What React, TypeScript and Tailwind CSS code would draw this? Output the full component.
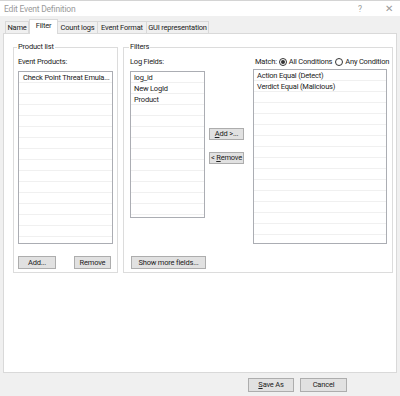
import React from "react";

function ListBox({
  items,
  rows,
  className,
  padX,
}: {
  items: string[];
  rows: number;
  className: string;
  padX: string;
}) {
  const all = Array.from({ length: rows }, (_, i) => items[i] ?? "");
  return (
    <div className={`bg-white border border-[#abadb3] overflow-hidden min-w-0 ${className}`}>
      {all.map((t, i) => (
        <div
          key={i}
          className={`h-[11px] leading-[11px] border-b border-[#f0f0f0] whitespace-nowrap overflow-hidden ${padX}`}
        >
          {t}
        </div>
      ))}
    </div>
  );
}

function Btn({ children, className }: { children: React.ReactNode; className: string }) {
  return (
    <div
      className={`bg-[#e1e1e1] border border-[#adadad] flex items-center justify-center leading-[10px] whitespace-nowrap shrink-0 ${className}`}
    >
      {children}
    </div>
  );
}

function Radio({ checked }: { checked: boolean }) {
  return (
    <span className="w-[8px] h-[8px] rounded-full border border-[#333] bg-white flex items-center justify-center">
      {checked && <span className="w-[4px] h-[4px] rounded-full bg-[#333]" />}
    </span>
  );
}

export default function App() {
  return (
    <div className="w-[400px] h-[396px] bg-[#f0f0f0] flex flex-col font-['Roboto',sans-serif] text-[7.5px] leading-[10px] text-[#222] overflow-hidden whitespace-nowrap tracking-[-0.2px]">
      {/* Title bar */}
      <div className="h-[16px] bg-white border-t border-[#d4d4d4] flex items-center pl-[4px] text-[#9a9a9a] text-[8.5px] shrink-0">
        <span>Edit Event Definition</span>
        <div className="ml-auto flex items-center">
          <span className="w-[10px] text-center mr-[13px]">?</span>
          <span className="w-[22px] text-center text-[10px]">✕</span>
        </div>
      </div>

      {/* Tabs */}
      <div className="h-[17px] flex items-end pl-[5px] shrink-0">
        <div className="w-[24px] h-[12px] border border-b-0 border-[#d9d9d9] bg-[#f0f0f0] flex items-center justify-center shrink-0">
          Name
        </div>
        <div className="w-[29px] h-[15px] border border-b-0 border-[#d9d9d9] bg-white flex items-start justify-center pt-[1px] relative z-10 -mb-[1px] shrink-0">
          Filter
        </div>
        <div className="w-[40px] h-[12px] border border-b-0 border-l-0 border-[#d9d9d9] bg-[#f0f0f0] flex items-center justify-center shrink-0">
          Count logs
        </div>
        <div className="w-[49px] h-[12px] border border-b-0 border-l-0 border-[#d9d9d9] bg-[#f0f0f0] flex items-center justify-center shrink-0">
          Event Format
        </div>
        <div className="w-[62px] h-[12px] border border-b-0 border-l-0 border-[#d9d9d9] bg-[#f0f0f0] flex items-center justify-center shrink-0">
          GUI representation
        </div>
      </div>

      {/* Panel */}
      <div className="mx-[3px] h-[340px] bg-white border border-[#d9d9d9] shrink-0 flex items-start pl-[9px] pr-[4px] pt-[8px] gap-[5px]">
        {/* Product list */}
        <fieldset className="w-[105px] min-w-0 shrink-0 h-[231px] border border-[#dcdcdc] px-[4px]">
          <legend className="px-[1px] -ml-[1px] leading-[10px]">Product list</legend>
          <div className="mt-[5px] h-[10px]">Event Products:</div>
          <ListBox
            items={["Check Point Threat Emula..."]}
            rows={16}
            className="mt-[4px] h-[173px] w-[95px]"
            padX="pl-[4px]"
          />
          <div className="flex mt-[12px] w-[95px]">
            <Btn className="w-[38px] h-[13px]">Add...</Btn>
            <Btn className="w-[37px] h-[13px] ml-auto mr-[2px]">Remove</Btn>
          </div>
        </fieldset>

        {/* Filters */}
        <fieldset className="w-[270px] min-w-0 shrink-0 h-[231px] border border-[#dcdcdc] pl-[6px] pr-[5px]">
          <legend className="px-[1px] -ml-[1px] leading-[10px]">Filters</legend>
          <div className="flex mt-[5px] w-[257px]">
            <div className="w-[75px] flex flex-col shrink-0">
              <div className="h-[10px]">Log Fields:</div>
              <ListBox
                items={["log_id", "New LogId", "Product"]}
                rows={14}
                className="mt-[4px] h-[147px] w-[75px]"
                padX="pl-[3px]"
              />
            </div>
            <div className="w-[35px] ml-[4px] flex flex-col gap-[12px] mt-[71px] shrink-0">
              <Btn className="h-[12px] w-[35px]">
                <span>
                  <span className="underline">A</span>dd &gt;...
                </span>
              </Btn>
              <Btn className="h-[12px] w-[35px]">
                <span>
                  &lt; <span className="underline">R</span>emove
                </span>
              </Btn>
            </div>
            <div className="ml-[9px] w-[134px] flex flex-col shrink-0">
              <div className="h-[10px] flex items-center pl-[2px] whitespace-nowrap w-[134px] overflow-visible">
                <span>Match:</span>
                <span className="ml-[2px]">
                  <Radio checked />
                </span>
                <span className="ml-[2px]">All Conditions</span>
                <span className="ml-[3px]">
                  <Radio checked={false} />
                </span>
                <span className="ml-[2px]">Any Condition</span>
              </div>
              <ListBox
                items={["Action Equal (Detect)", "Verdict Equal (Malicious)"]}
                rows={16}
                className="mt-[2px] h-[175px] w-[134px]"
                padX="pl-[3px]"
              />
            </div>
          </div>
          <Btn className="w-[75px] h-[13px] mt-[12px] ml-[1px]">Show more fields...</Btn>
        </fieldset>
      </div>

      {/* Bottom buttons */}
      <div className="flex justify-end gap-[6px] mt-[5px] mr-[53px]">
        <Btn className="w-[46px] h-[14px]">
          <span>
            <span className="underline">S</span>ave As
          </span>
        </Btn>
        <Btn className="w-[47px] h-[14px]">Cancel</Btn>
      </div>
    </div>
  );
}
